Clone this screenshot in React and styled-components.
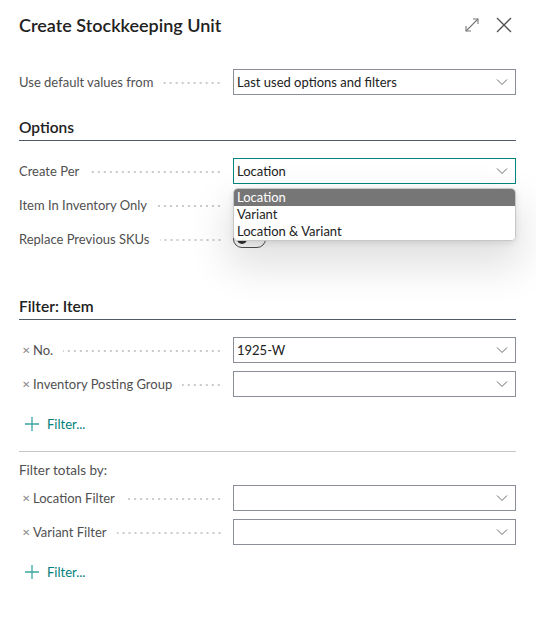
import styled, { createGlobalStyle } from "styled-components";

const GlobalStyle = createGlobalStyle`
  html, body {
    margin: 0;
    padding: 0;
    background: #ffffff;
  }
  body {
    font-family: "Segoe UI", Lato, "Noto Sans", sans-serif;
  }
`;

const Dialog = styled.div`
  width: 536px;
  height: 619px;
  box-sizing: border-box;
  padding: 0 20px 0 19px;
  background: #fff;
  display: flex;
  flex-direction: column;
`;

const TitleBar = styled.div`
  display: flex;
  align-items: center;
  justify-content: space-between;
  height: 50px;
`;

const Title = styled.h1`
  margin: 0;
  font-size: 18px;
  font-weight: 600;
  color: #212121;
`;

const TitleActions = styled.div`
  display: flex;
  align-items: center;
  gap: 12px;
  margin-right: 2px;
`;

const IconButton = styled.button`
  border: none;
  background: none;
  padding: 0;
  width: 20px;
  height: 20px;
  display: flex;
  align-items: center;
  justify-content: center;
  color: #505050;
`;

const Row = styled.div`
  display: flex;
  align-items: center;
  height: 26px;
  margin-top: ${(p) => p.$top || 8}px;
  position: relative;
`;

const LabelCell = styled.div`
  width: 214px;
  flex-shrink: 0;
  display: flex;
  align-items: center;
  padding-right: 11px;
  box-sizing: border-box;
  font-size: 13px;
  color: #505050;
  white-space: nowrap;
`;

const RemoveMark = styled.span`
  font-size: 10px;
  color: #8a8a8a;
  margin: 0 3px 0 3px;
`;

const Leader = styled.span`
  flex: 1;
  height: 2px;
  margin-left: 10px;
  margin-top: 2px;
  background-image: radial-gradient(circle, #cacaca 0.8px, transparent 1px);
  background-size: 6px 2px;
  background-position: right center;
  background-repeat: repeat-x;
`;

const Select = styled.div`
  flex: 1;
  height: 26px;
  box-sizing: border-box;
  border: 1px solid ${(p) => (p.$focused ? "#00857f" : "#8a8e96")};
  display: flex;
  align-items: center;
  justify-content: space-between;
  padding: 0 7px 0 3px;
  font-size: 13px;
  color: #212121;
  background: #fff;
`;

const SectionHeading = styled.h2`
  margin: ${(p) => p.$top || 18}px 0 0;
  padding-bottom: 4px;
  border-bottom: 1px solid #4f5b66;
  font-size: 15.5px;
  font-weight: 600;
  color: #212121;
`;

const Toggle = styled.div`
  width: 33px;
  height: 18px;
  box-sizing: border-box;
  border: 1px solid #505050;
  border-radius: 10px;
  display: flex;
  align-items: center;
  padding-left: 3px;
  &::before {
    content: "";
    width: 10px;
    height: 10px;
    border-radius: 50%;
    background: #333;
  }
`;

const Popup = styled.ul`
  position: absolute;
  left: 214px;
  right: 0;
  top: 30px;
  margin: 0;
  padding: 0;
  list-style: none;
  background: #fff;
  border: 1px solid #c8c8c8;
  border-radius: 5px;
  overflow: hidden;
  box-shadow: 0 20px 40px 6px rgba(0, 0, 0, 0.12), 0 2px 6px rgba(0, 0, 0, 0.1);
  z-index: 5;
`;

const PopupItem = styled.li`
  height: 17px;
  line-height: 17px;
  padding-left: 3px;
  font-size: 13px;
  color: ${(p) => (p.$selected ? "#fff" : "#212121")};
  background: ${(p) => (p.$selected ? "#767676" : "#fff")};
`;

const AddFilter = styled.button`
  border: none;
  background: none;
  padding: 0 0 0 6px;
  margin-top: ${(p) => p.$top || 18}px;
  display: flex;
  align-items: center;
  gap: 8px;
  height: 18px;
  font-family: inherit;
  font-size: 13px;
  color: #00807a;
  cursor: pointer;
`;

const Separator = styled.hr`
  border: none;
  border-top: 1px solid #c6c6c6;
  margin: 18px 0 0;
`;

const SubHeading = styled.div`
  margin-top: 10px;
  font-size: 13.5px;
  color: #505050;
`;

const Chevron = () => (
  <svg width="12" height="8" viewBox="0 0 12 8" fill="none">
    <path d="M1 1.5 L6 6.5 L11 1.5" stroke="#6a6a6a" strokeWidth="1" />
  </svg>
);

const ExpandIcon = () => (
  <svg width="16" height="16" viewBox="0 0 16 16" fill="none" stroke="#777" strokeWidth="1.1">
    <path d="M2 14 L14 2" />
    <path d="M9 2 H14 V7" />
    <path d="M2 9 V14 H7" />
  </svg>
);

const CloseIcon = () => (
  <svg width="18" height="18" viewBox="0 0 18 18" fill="none" stroke="#505050" strokeWidth="1.3">
    <path d="M2 2 L16 16 M16 2 L2 16" />
  </svg>
);

const PlusIcon = () => (
  <svg width="14" height="14" viewBox="0 0 14 14" fill="none" stroke="#3aa69f" strokeWidth="1.3">
    <path d="M7 0 V14 M0 7 H14" />
  </svg>
);

const Field = ({ label, removable, children, top }) => (
  <Row $top={top}>
    <LabelCell>
      {removable && <RemoveMark>✕</RemoveMark>}
      <span>{label}</span>
      <Leader />
    </LabelCell>
    {children}
  </Row>
);

const SelectBox = ({ value, focused }) => (
  <Select $focused={focused}>
    <span>{value}</span>
    <Chevron />
  </Select>
);

const App = () => {
  const options = ["Location", "Variant", "Location & Variant"];
  return (
    <>
      <GlobalStyle />
      <Dialog>
        <TitleBar>
          <Title>Create Stockkeeping Unit</Title>
          <TitleActions>
            <IconButton><ExpandIcon /></IconButton>
            <IconButton><CloseIcon /></IconButton>
          </TitleActions>
        </TitleBar>

        <Field label="Use default values from" top={19}>
          <SelectBox value="Last used options and filters" />
        </Field>

        <SectionHeading $top={23}>Options</SectionHeading>

        <Field label="Create Per" top={17}>
          <SelectBox value="Location" focused />
          <Popup>
            {options.map((o, i) => (
              <PopupItem key={o} $selected={i === 0}>{o}</PopupItem>
            ))}
          </Popup>
        </Field>
        <Field label="Item In Inventory Only">
          <span />
        </Field>
        <Field label="Replace Previous SKUs">
          <Toggle />
        </Field>

        <SectionHeading $top={45}>Filter: Item</SectionHeading>

        <Field label="No." removable top={17}>
          <SelectBox value="1925-W" />
        </Field>
        <Field label="Inventory Posting Group" removable>
          <SelectBox value="" />
        </Field>
        <AddFilter $top={18}><PlusIcon />Filter...</AddFilter>

        <Separator />
        <SubHeading>Filter totals by:</SubHeading>

        <Field label="Location Filter" removable top={7}>
          <SelectBox value="" />
        </Field>
        <Field label="Variant Filter" removable>
          <SelectBox value="" />
        </Field>
        <AddFilter $top={18}><PlusIcon />Filter...</AddFilter>
      </Dialog>
    </>
  );
};

export default App;
